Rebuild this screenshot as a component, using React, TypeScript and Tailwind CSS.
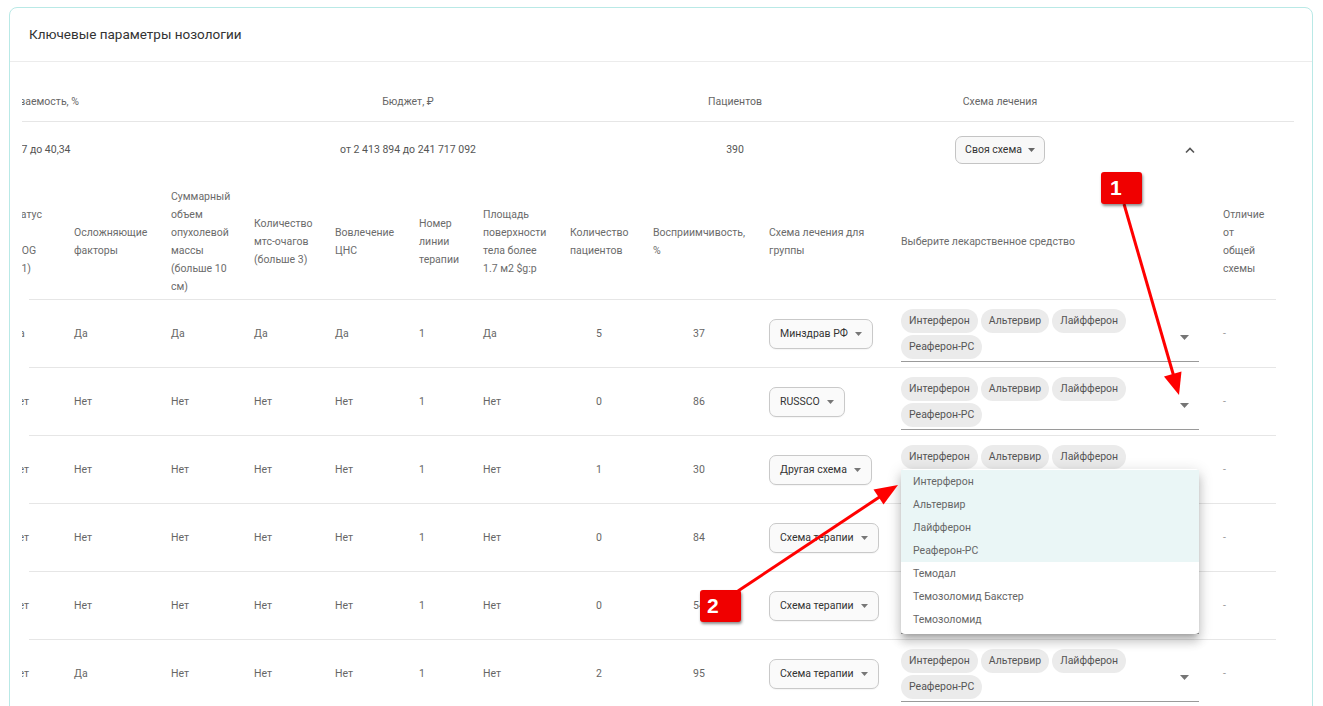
import React from "react";

const Caret = ({ w = 8, h = 4, color = "#757575" }: { w?: number; h?: number; color?: string }) => (
  <svg width={w} height={h} viewBox={`0 0 ${w} ${h}`} className="shrink-0">
    <path d={`M0 0H${w}L${w / 2} ${h}Z`} fill={color} />
  </svg>
);

const SelectBtn = ({ label }: { label: string }) => (
  <div className="inline-flex items-center h-[30px] pl-[10px] pr-[10px] gap-[7px] border border-[#c9c9c9] rounded-[7px] bg-[#fafafa] text-[10.5px] text-[#333] whitespace-nowrap shadow-[0_1px_1px_rgba(0,0,0,0.04)]">
    <span>{label}</span>
    <Caret w={7} h={4} color="#777" />
  </div>
);

const Chip = ({ label }: { label: string }) => (
  <div className="h-[24px] px-[8px] rounded-full bg-[#ebebeb] text-[10.5px] text-[#555] flex items-center whitespace-nowrap">
    {label}
  </div>
);

const Drugs = () => (
  <div className="flex w-[298px] border-b border-[#9a9a9a] pt-[9px] pb-[2px]">
    <div className="flex flex-wrap w-[262px] gap-x-[3px] gap-y-[2px]">
      <Chip label="Интерферон" />
      <Chip label="Альтервир" />
      <Chip label="Лайфферон" />
      <Chip label="Реаферон-РС" />
    </div>
    <div className="ml-auto mr-[10px] self-center mt-[6px]">
      <Caret w={9} h={5} color="#757575" />
    </div>
  </div>
);

const Menu = () => {
  const items = [
    ["Интерферон", true],
    ["Альтервир", true],
    ["Лайфферон", true],
    ["Реаферон-РС", true],
    ["Темодал", false],
    ["Темозоломид Бакстер", false],
    ["Темозоломид", false],
  ] as const;
  return (
    <div className="absolute left-0 top-[33px] w-[298px] z-10 bg-white rounded-[4px] pt-[1px] pb-[3px] shadow-[0_5px_5px_-3px_rgba(0,0,0,0.2),0_8px_10px_1px_rgba(0,0,0,0.14),0_3px_14px_2px_rgba(0,0,0,0.12)]">
      {items.map(([t, sel]) => (
        <div
          key={t}
          className={`h-[23px] flex items-center pl-[12px] text-[10.5px] text-[#666] ${sel ? "bg-[#eaf6f6]" : "bg-white"}`}
        >
          {t}
        </div>
      ))}
    </div>
  );
};

type Row = { c0: string; c: string[]; line: string; area: string; pat: string; rec: string; scheme: string };

const rows: Row[] = [
  { c0: "Да", c: ["Да", "Да", "Да", "Да"], line: "1", area: "Да", pat: "5", rec: "37", scheme: "Минздрав РФ" },
  { c0: "Нет", c: ["Нет", "Нет", "Нет", "Нет"], line: "1", area: "Нет", pat: "0", rec: "86", scheme: "RUSSCO" },
  { c0: "Нет", c: ["Нет", "Нет", "Нет", "Нет"], line: "1", area: "Нет", pat: "1", rec: "30", scheme: "Другая схема" },
  { c0: "Нет", c: ["Нет", "Нет", "Нет", "Нет"], line: "1", area: "Нет", pat: "0", rec: "84", scheme: "Схема терапии" },
  { c0: "Нет", c: ["Нет", "Нет", "Нет", "Нет"], line: "1", area: "Нет", pat: "0", rec: "54", scheme: "Схема терапии" },
  { c0: "Нет", c: ["Да", "Нет", "Нет", "Нет"], line: "1", area: "Нет", pat: "2", rec: "95", scheme: "Схема терапии" },
];

const gridCols =
  "grid grid-cols-[45px_97px_83px_81px_84px_64px_87px_83px_116px_132px_322px_53px]";

const H = ({ lines }: { lines: string[] }) => (
  <div className="self-center">
    {lines.map((l, i) => (
      <div key={i} className="whitespace-nowrap">
        {l}
      </div>
    ))}
  </div>
);

export default function App() {
  return (
    <div className="relative w-[1323px] h-[706px] overflow-hidden bg-white font-['Roboto','Noto_Sans',sans-serif]">
      <div className="pt-[7px] pl-[9px]">
        <div className="w-[1304px] h-[760px] border border-[#b9e9e6] rounded-[8px] bg-white">
          <div className="h-[54px] flex items-center pl-[19px] border-b border-[#ececec] text-[13.5px] text-[#333]">
            Ключевые параметры нозологии
          </div>
          <div className="pt-[20px]">
            <div className="ml-[12px] mr-[18px] overflow-hidden">
              {/* Summary table */}
              <div className="grid grid-cols-[228px_316px_338px_192px_198px] h-[40px] border-b border-[#e6e6e6] text-[10.5px] text-[#666] items-center">
                <div className="whitespace-nowrap ml-[-38px]">Заболеваемость, %</div>
                <div className="text-center">Бюджет, ₽</div>
                <div className="text-center">Пациентов</div>
                <div className="text-center">Схема лечения</div>
                <div />
              </div>
              <div className="grid grid-cols-[228px_316px_338px_192px_198px] h-[56px] text-[10.5px] text-[#555] items-center">
                <div className="whitespace-nowrap ml-[-28px]">от 0,17 до 40,34</div>
                <div className="text-center">от 2 413 894 до 241 717 092</div>
                <div className="text-center">390</div>
                <div className="flex justify-center">
                  <div className="inline-flex items-center h-[28px] px-[9px] gap-[6px] border border-[#c4c4c4] rounded-[7px] bg-[#f8f8f8] text-[10.5px] text-[#333]">
                    <span>Своя схема</span>
                    <Caret w={7} h={4} color="#666" />
                  </div>
                </div>
                <div className="pl-[88px] flex items-center">
                  <svg width="12" height="8" viewBox="0 0 12 8">
                    <path d="M2 6.5L6 2.5L10 6.5" fill="none" stroke="#555" strokeWidth="1.6" />
                  </svg>
                </div>
              </div>

              {/* Inner table */}
              <div className="ml-[7px] w-[1247px] mt-[6px]">
                <div className={`${gridCols} h-[116px] border-b border-[#e6e6e6] text-[10.5px] leading-[18px] text-[#6b6b6b]`}>
                  <div className="self-center ml-[-20px]">
                    <H lines={["Статус", "по", "ECOG", "(0-1)"]} />
                  </div>
                  <H lines={["Осложняющие", "факторы"]} />
                  <H lines={["Суммарный", "объем", "опухолевой", "массы", "(больше 10", "см)"]} />
                  <H lines={["Количество", "мтс-очагов", "(больше 3)"]} />
                  <H lines={["Вовлечение", "ЦНС"]} />
                  <H lines={["Номер", "линии", "терапии"]} />
                  <H lines={["Площадь", "поверхности", "тела более", "1.7 м2 $g:p"]} />
                  <H lines={["Количество", "пациентов"]} />
                  <H lines={["Восприимчивость,", "%"]} />
                  <H lines={["Схема лечения для", "группы"]} />
                  <H lines={["Выберите лекарственное средство"]} />
                  <H lines={["Отличие", "от", "общей", "схемы"]} />
                </div>
                {rows.map((r, i) => (
                  <div
                    key={i}
                    className={`${gridCols} h-[68px] border-b border-[#e6e6e6] text-[10.5px] text-[#666] items-center`}
                  >
                    <div className="ml-[-18px] whitespace-nowrap">{r.c0}</div>
                    {r.c.map((v, j) => (
                      <div key={j}>{v}</div>
                    ))}
                    <div>{r.line}</div>
                    <div>{r.area}</div>
                    <div className="w-[58px] text-center">{r.pat}</div>
                    <div className="w-[92px] text-center">{r.rec}</div>
                    <div>
                      <SelectBtn label={r.scheme} />
                    </div>
                    <div className="self-start relative">
                      <Drugs />
                      {i === 2 && <Menu />}
                    </div>
                    <div className="text-[#999]">-</div>
                  </div>
                ))}
              </div>
            </div>
          </div>
        </div>
      </div>

      {/* Annotations */}
      <svg
        className="absolute left-0 top-0 pointer-events-none z-20"
        width="1323"
        height="706"
        viewBox="0 0 1323 706"
      >
        <line x1="1124" y1="204" x2="1174" y2="377" stroke="#ff0000" strokeWidth="3" />
        <polygon points="1179,395 1164,376.5 1181.5,371.5" fill="#ff0000" />
        <line x1="738" y1="591" x2="881" y2="496" stroke="#ff0000" strokeWidth="3" />
        <polygon points="898,485 883.5,504.5 873.5,489.5" fill="#ff0000" />
      </svg>
      <div className="absolute left-[1101px] top-[172px] w-[41px] h-[32px] z-30 rounded-[3px] bg-[#f00000] shadow-[1px_2px_3px_rgba(0,0,0,0.45)] flex items-center pl-[9px] text-white text-[21px] font-bold font-['Liberation_Sans',sans-serif]">
        1
      </div>
      <div className="absolute left-[700px] top-[590px] w-[41px] h-[32px] z-30 rounded-[3px] bg-[#f00000] shadow-[1px_2px_3px_rgba(0,0,0,0.45)] flex items-center pl-[7px] text-white text-[21px] font-bold font-['Liberation_Sans',sans-serif]">
        2
      </div>
    </div>
  );
}
